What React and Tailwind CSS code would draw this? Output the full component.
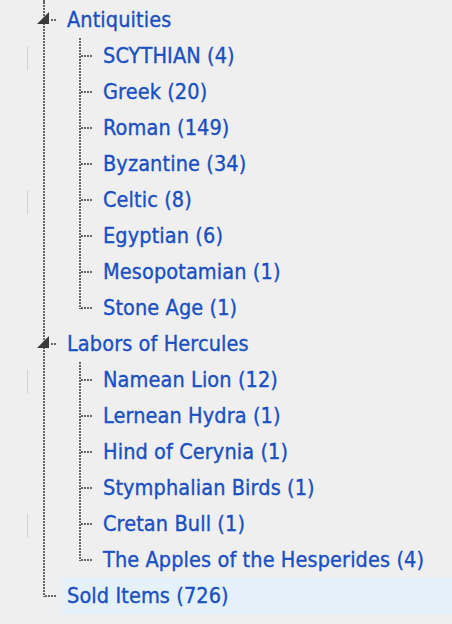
import React from "react";

const VDOT =
  "bg-[repeating-linear-gradient(to_bottom,#666666_0px,#666666_2px,transparent_2px,transparent_3px)]";
const HDOT =
  "bg-[repeating-linear-gradient(to_right,#666666_0px,#666666_2px,transparent_2px,transparent_3px)]";

function MainCell({ kind, faint }) {
  return (
    <div className="relative flex h-full w-[62px] shrink-0">
      <div className="w-[27px] shrink-0" />
      <div className="flex w-[16px] shrink-0 items-center pt-[3px]">
        {faint && <div className="h-[24px] w-px bg-[#d2d2d2]" />}
      </div>
      <div className="flex w-[2px] shrink-0 flex-col">
        <div className={`${VDOT} ${kind === "last" ? "h-[19px]" : "flex-1"}`} />
      </div>
      <div className="flex flex-1 items-center">
        {kind === "branch" && <div className={`${HDOT} ml-[6px] h-[2px] w-[6px]`} />}
        {kind === "last" && <div className={`${HDOT} h-[2px] w-[12px]`} />}
      </div>
      {kind === "branch" && (
        <svg
          className="absolute left-[37px] top-[10px]"
          width="12"
          height="12"
          viewBox="0 0 12 12"
        >
          <polygon points="12,0 12,12 0,12" fill="#3a3a3a" />
        </svg>
      )}
    </div>
  );
}

function SubCell({ last }) {
  return (
    <div className="flex h-full w-[36px] shrink-0">
      <div className="w-[17px] shrink-0" />
      <div className="flex w-[2px] shrink-0 flex-col">
        <div className={`${VDOT} ${last ? "h-[19px]" : "flex-1"}`} />
      </div>
      <div className="flex items-center">
        <div className={`${HDOT} h-[2px] w-[12px]`} />
      </div>
    </div>
  );
}

function Label({ children, selected }) {
  return (
    <div
      className={`flex h-full flex-1 items-center pl-[5px] ${
        selected ? "bg-[#e4f1f9]" : ""
      }`}
    >
      <span className="whitespace-nowrap text-[21.5px] leading-none tracking-[0.1px] text-[#1a50c2] [-webkit-text-stroke:0.35px_#1a50c2]">
        {children}
      </span>
    </div>
  );
}

const groups = [
  {
    name: "Antiquities",
    items: [
      ["SCYTHIAN (4)", true],
      ["Greek (20)"],
      ["Roman (149)"],
      ["Byzantine (34)"],
      ["Celtic (8)", true],
      ["Egyptian (6)"],
      ["Mesopotamian (1)"],
      ["Stone Age (1)"],
    ],
  },
  {
    name: "Labors of Hercules",
    items: [
      ["Namean Lion (12)", true],
      ["Lernean Hydra (1)"],
      ["Hind of Cerynia (1)"],
      ["Stymphalian Birds (1)"],
      ["Cretan Bull (1)", true],
      ["The Apples of the Hesperides (4)"],
    ],
  },
];

export default function App() {
  return (
    <div
      className="h-[624px] w-[452px] overflow-hidden bg-[#efefef]"
      style={{ fontFamily: "'DejaVu Sans Condensed', 'DejaVu Sans', sans-serif" }}
    >
      <div className="flex h-[2px]">
        <div className="w-[43px] shrink-0" />
        <div className={`${VDOT} w-[2px]`} />
      </div>
      {groups.map((g) => (
        <div key={g.name} className="flex flex-col">
          <div className="flex h-[36px]">
            <MainCell kind="branch" />
            <Label>{g.name}</Label>
          </div>
          {g.items.map(([label, faint], i) => (
            <div key={label} className="flex h-[36px]">
              <MainCell kind="pass" faint={faint} />
              <SubCell last={i === g.items.length - 1} />
              <Label>{label}</Label>
            </div>
          ))}
        </div>
      ))}
      <div className="flex h-[36px]">
        <MainCell kind="last" />
        <Label selected>Sold Items (726)</Label>
      </div>
    </div>
  );
}
